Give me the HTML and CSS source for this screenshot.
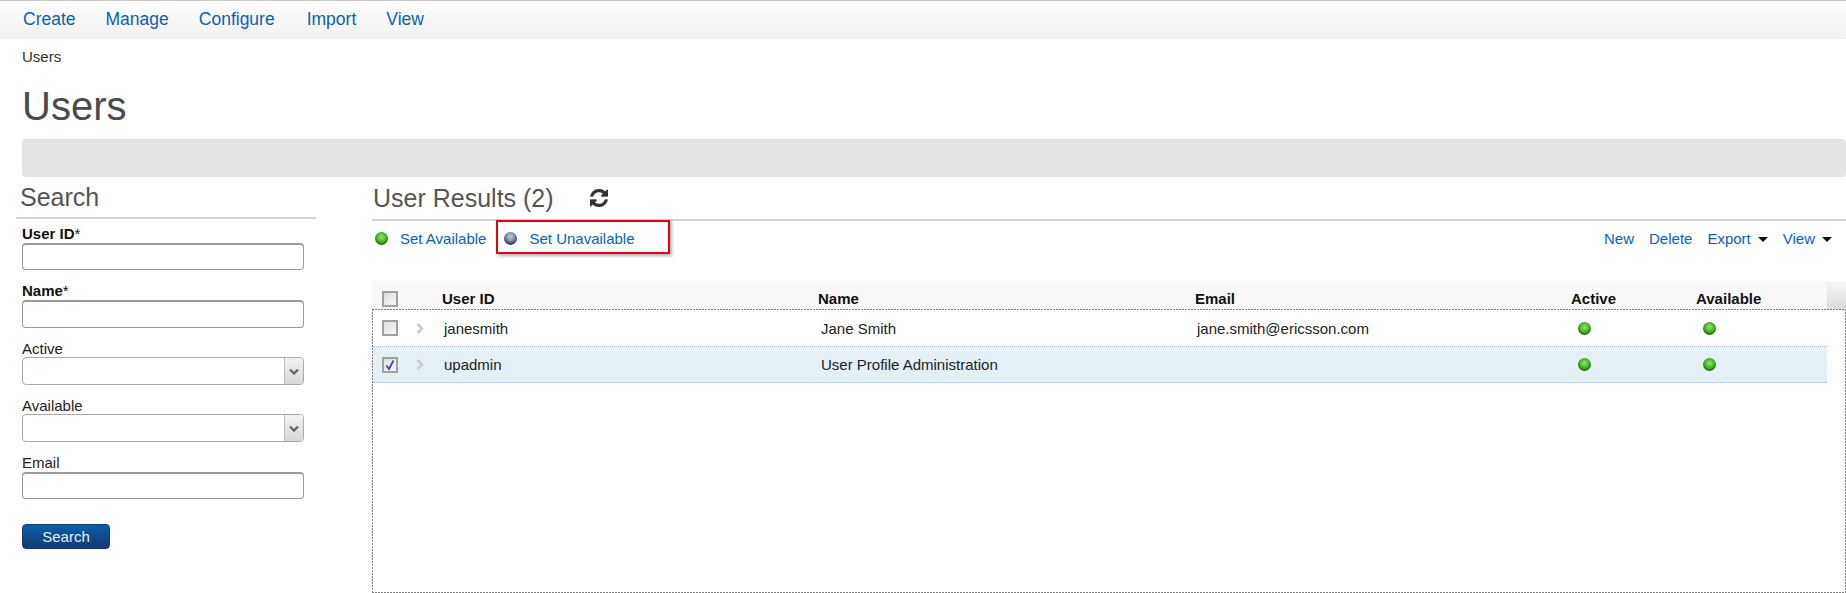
FILE: index.html
```html
<!DOCTYPE html>
<html>

<head>
    <title>Users</title>
    <link rel="stylesheet" href="styles.css">
</head>

<body>
    <div class="topnav">
        <a href="#">Create</a>
        <a href="#">Manage</a>
        <a href="#">Configure</a>
        <a href="#">Import</a>
        <a href="#">View</a>
    </div>

    <div class="crumb">Users</div>
    <h1 class="page-title">Users</h1>
    <div class="message-bar"></div>

    <div class="content">
        <div class="sidebar">
            <h2 class="side-title">Search</h2>
            <form class="search-form">
                <div class="field field-id">
                    <label class="req">User ID<span class="star">*</span></label>
                    <input class="text-input" type="text">
                </div>
                <div class="field field-name">
                    <label class="req">Name<span class="star">*</span></label>
                    <input class="text-input" type="text">
                </div>
                <div class="field field-active">
                    <label>Active</label>
                    <div class="select-box"><span class="select-arrow"><svg width="10" height="7" viewBox="0 0 10 7"><path d="M1 1.5 5 5.5 9 1.5" fill="none" stroke="#666" stroke-width="2.4"/></svg></span></div>
                </div>
                <div class="field field-available">
                    <label>Available</label>
                    <div class="select-box"><span class="select-arrow"><svg width="10" height="7" viewBox="0 0 10 7"><path d="M1 1.5 5 5.5 9 1.5" fill="none" stroke="#666" stroke-width="2.4"/></svg></span></div>
                </div>
                <div class="field field-email">
                    <label>Email</label>
                    <input class="text-input" type="text">
                </div>
                <button class="search-btn" type="button">Search</button>
            </form>
        </div>

        <div class="results">
            <div class="results-head">
                <h2 class="results-title">User Results (2)</h2>
                <svg class="refresh" width="18" height="18" viewBox="0 0 1536 1536"><path fill="#333" stroke="#333" stroke-width="30" d="M1511 928q0 5-1 7-64 268-268 434.5t-478 166.5q-146 0-282.5-55t-243.5-157l-129 129q-19 19-45 19t-45-19-19-45v-448q0-26 19-45t45-19h448q26 0 45 19t19 45-19 45l-137 137q71 66 161 102t187 36q134 0 250-65t186-179q11-17 53-117 8-23 30-23h192q13 0 22.5 9.5t9.5 22.5zm25-800v448q0 26-19 45t-45 19h-448q-26 0-45-19t-19-45 19-45l138-138q-148-137-349-137-134 0-250 65t-186 179q-11 17-53 117-8 23-30 23h-199q-13 0-22.5-9.5t-9.5-22.5v-7q65-268 270-434.5t480-166.5q146 0 284 55.5t245 156.5l130-129q19-19 45-19t45 19 19 45z"/></svg>
            </div>

            <div class="toolbar">
                <div class="actions">
                    <a href="#" class="action"><span class="ball green"></span>Set Available</a>
                    <a href="#" class="action action-off"><span class="ball gray"></span>Set Unavailable</a>
                    <div class="callout"></div>
                </div>
                <div class="tools">
                    <a href="#">New</a>
                    <a href="#">Delete</a>
                    <a href="#" class="has-caret">Export<span class="caret"></span></a>
                    <a href="#" class="has-caret">View<span class="caret"></span></a>
                </div>
            </div>

            <div class="grid-head">
                <div class="row head-row">
                    <div class="cell"><span class="cb"></span></div>
                    <div class="cell">User ID</div>
                    <div class="cell">Name</div>
                    <div class="cell">Email</div>
                    <div class="cell">Active</div>
                    <div class="cell">Available</div>
                </div>
                <div class="head-end"></div>
            </div>

            <div class="grid-body">
                <div class="row body-row">
                    <div class="cell cell-check"><span class="cb"></span><svg class="chev" width="8" height="11" viewBox="0 0 8 11"><path d="M1.5 1 6 5.5 1.5 10" fill="none" stroke="#ccc" stroke-width="2.6"/></svg></div>
                    <div class="cell">janesmith</div>
                    <div class="cell">Jane Smith</div>
                    <div class="cell">jane.smith@ericsson.com</div>
                    <div class="cell"><span class="ball green"></span></div>
                    <div class="cell"><span class="ball green"></span></div>
                </div>
                <div class="row body-row selected">
                    <div class="cell cell-check"><span class="cb"><svg width="12" height="12" viewBox="0 0 12 12"><path d="M2.5 6.5 5 10 9.5 1.5" fill="none" stroke="#3a50a0" stroke-width="1.8"/></svg></span><svg class="chev" width="8" height="11" viewBox="0 0 8 11"><path d="M1.5 1 6 5.5 1.5 10" fill="none" stroke="#ccc" stroke-width="2.6"/></svg></div>
                    <div class="cell">upadmin</div>
                    <div class="cell">User Profile Administration</div>
                    <div class="cell"></div>
                    <div class="cell"><span class="ball green"></span></div>
                    <div class="cell"><span class="ball green"></span></div>
                </div>
            </div>
        </div>
    </div>
</body>

</html>
```

FILE: styles.css
```css
* {
    box-sizing: border-box;
}

html,
body {
    height: 593px;
    overflow: hidden;
}

body {
    margin: 0;
    font-family: "Liberation Sans", Arial, sans-serif;
    font-size: 15px;
    color: #222;
    background: #fff;
}

a {
    color: #0a62b4;
    text-decoration: none;
}

.topnav {
    height: 39px;
    border-top: 1px solid #ccc;
    background: linear-gradient(#fff, #f0f0f0);
    display: flex;
    align-items: center;
    gap: 30px;
    padding-left: 23px;
    padding-bottom: 1px;
    font-size: 17.5px;
}

.topnav a:nth-child(4) {
    margin-left: 2px;
}

.crumb {
    height: 18px;
    margin-top: 9px;
    padding-left: 22px;
    line-height: 18px;
    color: #333;
}

.page-title {
    margin: 17px 0 0 22px;
    height: 46px;
    line-height: 46px;
    font-size: 40px;
    font-weight: normal;
    color: #4a4a4a;
}

.message-bar {
    height: 38px;
    margin: 10px 0 0 22px;
    background: #e4e4e4;
    border-radius: 4px;
}

.content {
    display: flex;
}

.sidebar {
    width: 316px;
    margin-left: 16px;
    flex: none;
}

.side-title {
    margin: 0;
    height: 42px;
    padding: 6px 0 0 4px;
    line-height: 29px;
    font-size: 25px;
    font-weight: normal;
    color: #555;
    border-bottom: 2px solid #d4d4d4;
    width: 300px;
}

.search-form {
    padding-left: 6px;
}

.field label {
    display: block;
    height: 17px;
    line-height: 17px;
    color: #222;
}

.field .req {
    font-weight: bold;
    color: #111;
}

.field .star {
    font-weight: normal;
}

.field-id {
    padding-top: 6px;
}

.field-name {
    padding-top: 12px;
}

.field-active {
    padding-top: 12px;
}

.field-available {
    padding-top: 12px;
}

.field-email {
    padding-top: 12px;
}

.text-input {
    display: block;
    width: 282px;
    height: 27px;
    margin-top: 1px;
    border: 1px solid #999;
    border-top-width: 2px;
    border-radius: 4px;
    background: #fff;
    padding: 0 4px;
}

.field-name .text-input {
    height: 28px;
}

.select-box {
    display: flex;
    justify-content: flex-end;
    width: 282px;
    height: 28px;
    border: 1px solid #aaa;
    border-radius: 4px;
    background: #fff;
    overflow: hidden;
}

.select-arrow {
    width: 19px;
    border-left: 1px solid #bbb;
    background: linear-gradient(#f2f2f2, #d8d8d8);
    display: flex;
    align-items: center;
    justify-content: center;
}

.search-btn {
    display: block;
    width: 88px;
    height: 25px;
    margin-top: 25px;
    border: 1px solid #103a70;
    border-radius: 4px;
    background: linear-gradient(#0a5fa8, #123a72);
    color: #e8eef5;
    font-family: inherit;
    font-size: 15px;
    padding: 0;
}

.results {
    flex: 1;
    min-width: 0;
    margin-left: 40px;
}

.results-head {
    display: flex;
    align-items: center;
    height: 44px;
    padding-left: 1px;
    border-bottom: 2px solid #d4d4d4;
}

.results-title {
    margin: 0;
    width: 217px;
    font-size: 25px;
    font-weight: normal;
    color: #555;
    line-height: 29px;
}

.refresh {
    margin-top: -1px;
}

.toolbar {
    display: flex;
    justify-content: space-between;
    align-items: flex-start;
    height: 60px;
    padding-top: 9px;
    line-height: 17px;
}

.actions {
    display: flex;
    position: relative;
    padding-left: 3px;
    height: 17px;
}

.action {
    display: flex;
    align-items: center;
    gap: 12px;
    height: 17px;
}

.action-off {
    margin-left: 18px;
}

.callout {
    position: absolute;
    left: 124px;
    top: -10px;
    width: 174px;
    height: 34px;
    border: 2px solid #e8000d;
    box-shadow: 2px 2px 3px rgba(0, 0, 0, 0.3);
}

.tools {
    display: flex;
    gap: 15px;
    padding-right: 14px;
}

.has-caret {
    display: flex;
    align-items: center;
    gap: 7px;
}

.caret {
    width: 0;
    height: 0;
    border-left: 5px solid transparent;
    border-right: 5px solid transparent;
    border-top: 5px solid #111;
    margin-top: 2px;
}

.ball {
    display: inline-block;
    width: 13px;
    height: 13px;
    border-radius: 50%;
    flex: none;
}

.ball.green {
    background: radial-gradient(circle 8px at 50% 40%, #8fe86a 0, #50bd2a 50%, #256f12 90%);
}

.ball.gray {
    background: radial-gradient(circle 8px at 50% 36%, #c2ced9 0, #8093a7 50%, #36465a 90%);
}

.grid-head {
    display: flex;
    height: 28px;
}

.row {
    display: grid;
    grid-template-columns: 69px 376px 377px 376px 125px 1fr;
    width: 1455px;
}

.head-row {
    background: #f9f9f9;
    font-weight: bold;
    color: #111;
    align-items: end;
    padding-left: 1px;
    line-height: 18px;
    padding-bottom: 1px;
}

.head-row .cell:first-child {
    padding-left: 9px;
    height: 18px;
    padding-top: 1px;
}

.head-end {
    flex: 1;
    background: linear-gradient(#f7f7f7, #dcdcdc);
}

/* dashed frame drawn as gradients, browser dashes are too long at 1px */
.grid-body {
    height: 284px;
    padding: 1px;
    background-image:
        repeating-linear-gradient(to right, #7d7d7d 0 2px, transparent 2px 3px),
        repeating-linear-gradient(to right, #7d7d7d 0 2px, transparent 2px 3px),
        repeating-linear-gradient(to bottom, #7d7d7d 0 2px, transparent 2px 3px),
        repeating-linear-gradient(to bottom, #7d7d7d 0 2px, transparent 2px 3px);
    background-size: 100% 1px, 100% 1px, 1px 100%, 1px 100%;
    background-position: 0 0, 0 100%, 0 0, 100% 0;
    background-repeat: no-repeat;
}

.body-row {
    height: 37px;
    align-items: center;
    width: 1454px;
    border-bottom: 1px dotted #9fbbdc;
}

.body-row .cell {
    padding-left: 2px;
}

.body-row .cell:nth-child(3) {
    padding-left: 3px;
}

.body-row .cell:nth-child(5),
.body-row .cell:nth-child(6) {
    padding-left: 7px;
    display: flex;
}

.body-row .cell-check {
    display: flex;
    align-items: center;
    padding-left: 9px;
    gap: 18px;
}

.selected {
    background: #e4eff6;
    height: 36px;
}

.cb {
    display: block;
    width: 16px;
    height: 16px;
    border: 2px solid #a0a0a0;
    background: linear-gradient(135deg, #dedede, #f8f8f8);
}

.cb svg {
    display: block;
}

.chev {
    flex: none;
}
```
